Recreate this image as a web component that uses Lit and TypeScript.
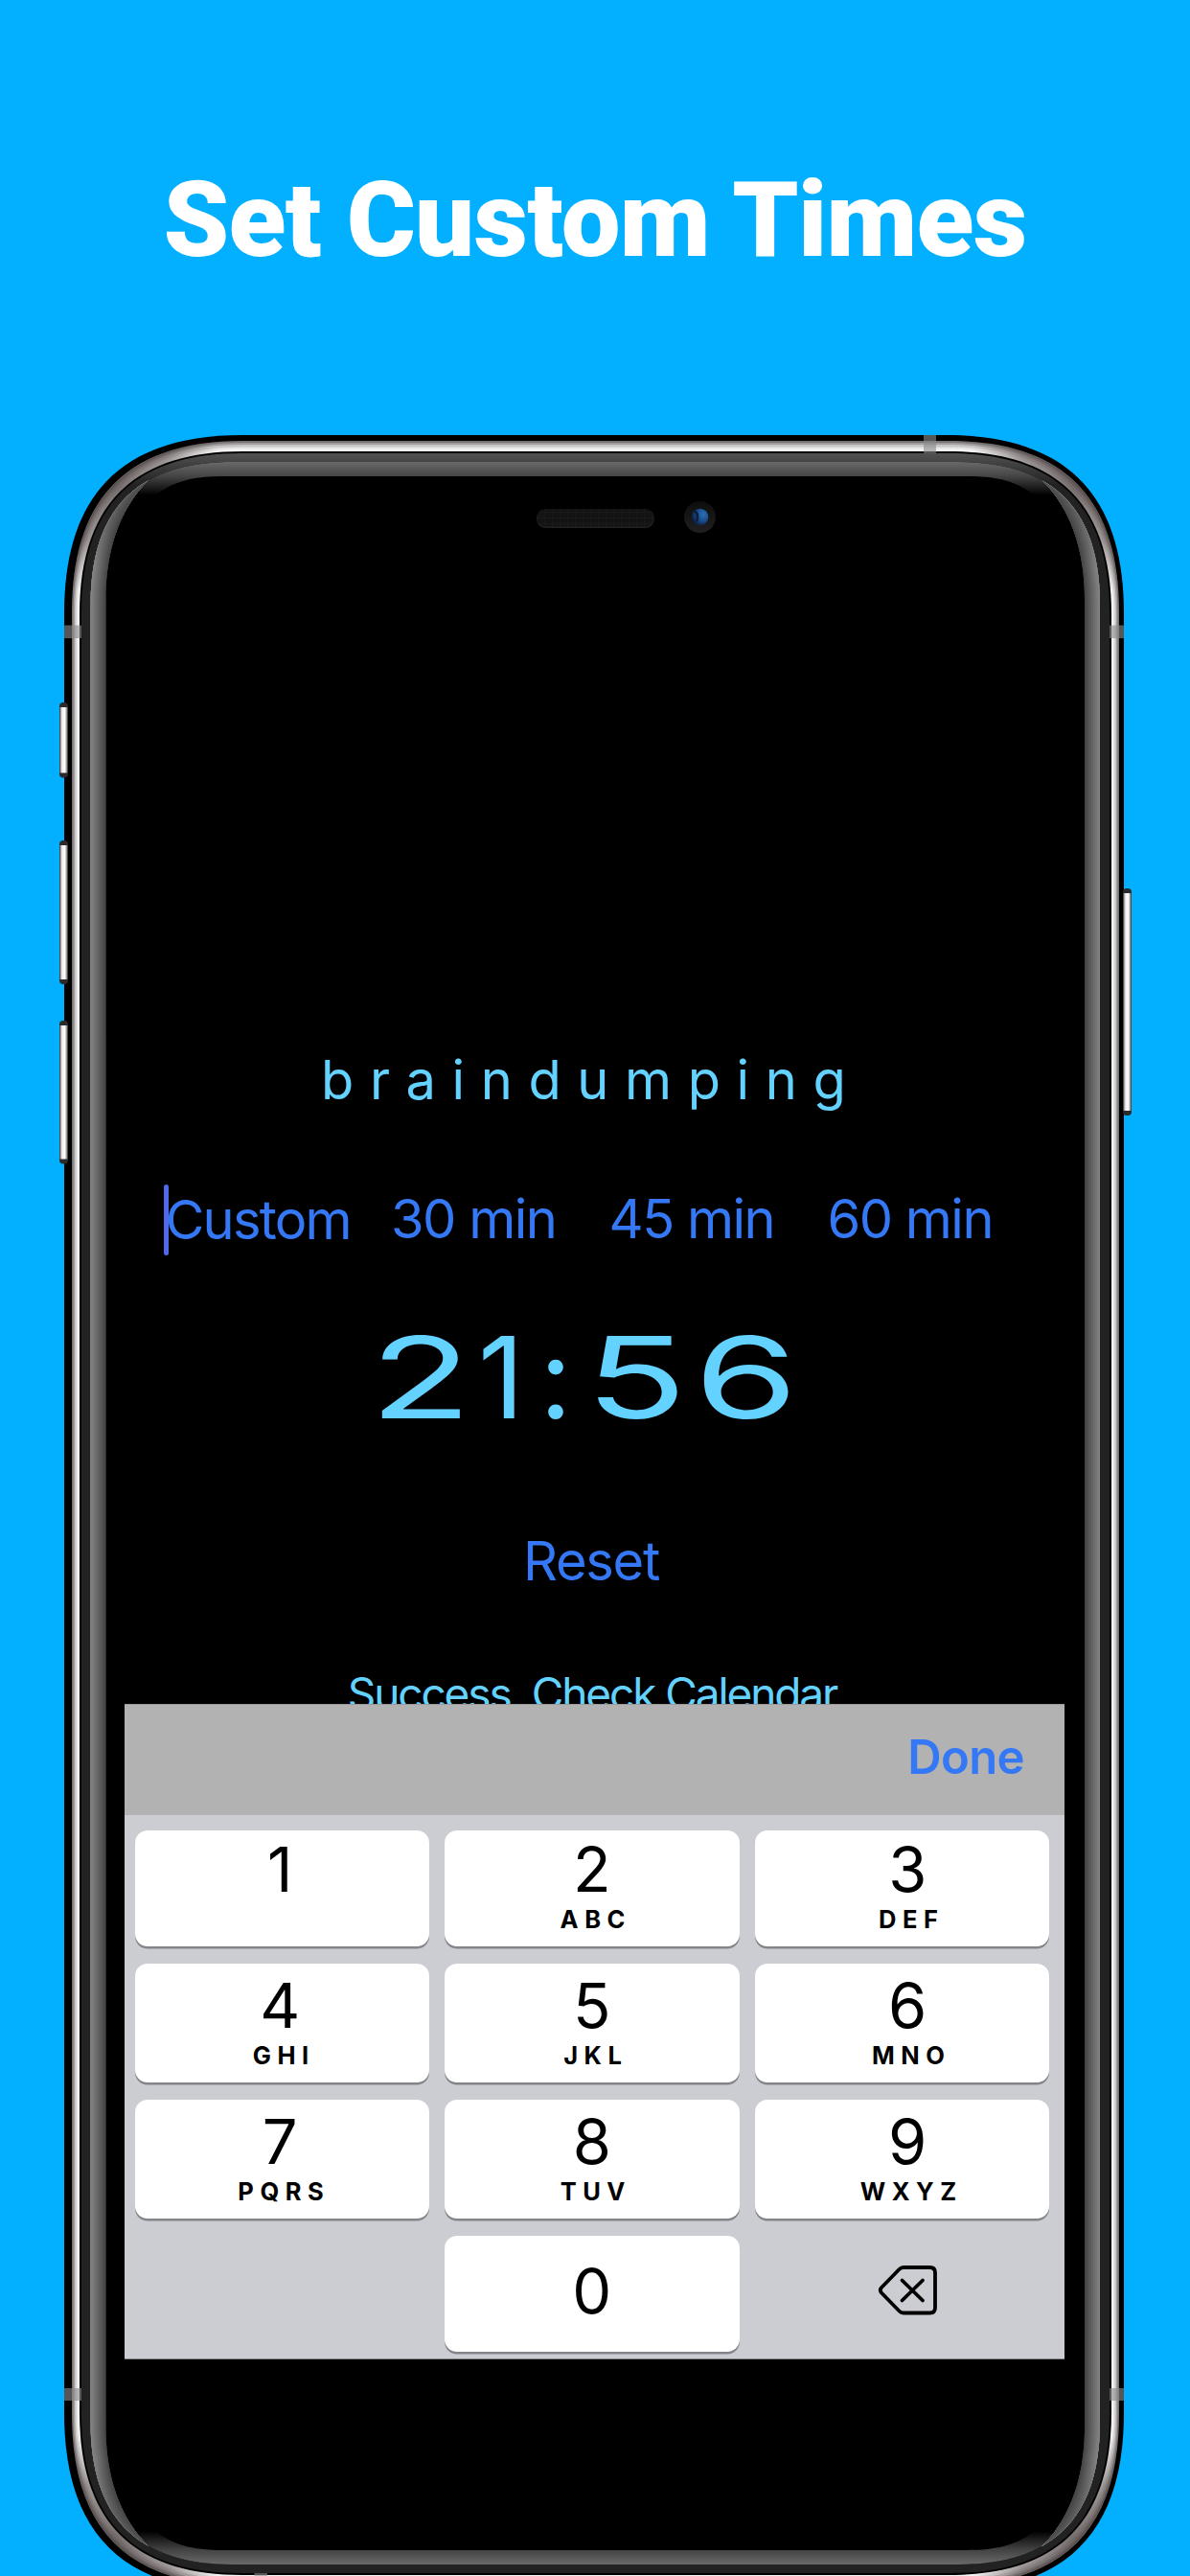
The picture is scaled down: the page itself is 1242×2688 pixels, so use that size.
import { LitElement, html, svg, css } from "lit";
import { customElement } from "lit/decorators.js";
import { classMap } from "lit/directives/class-map.js";

/** Closed contour with continuous-curvature corners of extent k. */
function contour(l: number, t: number, r: number, b: number, k: number): string {
  const h = k * 0.328;
  return (
    `M${l} ${t + k}C${l} ${t + h} ${l + h} ${t} ${l + k} ${t}` +
    `H${r - k}C${r - h} ${t} ${r} ${t + h} ${r} ${t + k}` +
    `V${b - k}C${r} ${b - h} ${r - h} ${b} ${r - k} ${b}` +
    `H${l + k}C${l + h} ${b} ${l} ${b - h} ${l} ${b - k}Z`
  );
}

@customElement("phone-frame")
class PhoneFrame extends LitElement {
  static styles = css`
    :host { display: block; }
    svg { display: block; }
  `;

  private sideButton(x: number, y: number, h: number) {
    return svg`
      <rect x=${x} y=${y} width="9" height=${h} rx="4" fill="#2b2b2b"></rect>
      <rect x=${x + 0.5} y=${y + 5} width="8" height=${h - 10} fill="url(#btn)"></rect>`;
  }

  render() {
    const rim = [
      [75, 460, 1168, 2698, "#777272"],
      [76.5, 462, 1166.5, 2696, "#a19d9d"],
      [78, 464, 1165, 2694, "#c9c6c6"],
      [79.5, 466.5, 1163.5, 2691.5, "#e6e5e5"],
      [81, 468.5, 1162, 2689.5, "#f6f5f5"],
    ] as const;
    const glass = contour(94.5, 482, 1148, 2676, 149);
    const sheen = Array.from({ length: 9 }, (_, i) => {
      const level = Math.round(66 + (i * 67) / 8);
      return { width: 34 - i * 4, color: `rgb(${level},${level},${level})` };
    });
    return html`
      <svg width="1242" height="2688" viewBox="0 0 1242 2688" aria-hidden="true">
        <defs>
          <linearGradient id="btn"><stop offset="0" stop-color="#77706f"/><stop offset=".3" stop-color="#f5f1f0"/><stop offset=".65" stop-color="#fffdfc"/><stop offset="1" stop-color="#6d6866"/></linearGradient>
          <linearGradient id="top" gradientUnits="userSpaceOnUse" x1="0" x2="0" y1="482" y2="517"><stop offset="0" stop-color="#696969"/><stop offset=".43" stop-color="#444"/><stop offset="1" stop-color="#000"/></linearGradient>
          <linearGradient id="bottom" gradientUnits="userSpaceOnUse" x1="0" x2="0" y1="2676" y2="2641"><stop offset="0" stop-color="#696969"/><stop offset=".43" stop-color="#444"/><stop offset="1" stop-color="#000"/></linearGradient>
          <linearGradient id="bezel" gradientUnits="userSpaceOnUse" x1="0" x2="0" y1="473" y2="506"><stop offset="0" stop-color="#525252"/><stop offset=".35" stop-color="#404040"/><stop offset="1" stop-color="#222"/></linearGradient>
          <linearGradient id="dim" gradientUnits="userSpaceOnUse" x1="0" x2="0" y1="482" y2="2676"><stop offset=".008" stop-opacity=".42"/><stop offset=".05" stop-opacity="0"/><stop offset=".95" stop-opacity="0"/><stop offset=".992" stop-opacity=".42"/></linearGradient>
          <radialGradient id="shade"><stop offset="0" stop-color="#4a3f3e" stop-opacity=".72"/><stop offset=".55" stop-color="#4a3f3e" stop-opacity=".5"/><stop offset="1" stop-color="#4a3f3e" stop-opacity="0"/></radialGradient>
          <radialGradient id="lens" cx=".7" cy=".35" r=".75"><stop offset="0" stop-color="#2a6fb5"/><stop offset=".5" stop-color="#1b4f8c"/><stop offset="1" stop-color="#0b1730"/></radialGradient>
          <linearGradient id="ring" x2="0" y2="1"><stop offset="0" stop-color="#0d0d0d"/><stop offset="1" stop-color="#202020"/></linearGradient>
          <pattern id="mesh" width="8" height="6" patternUnits="userSpaceOnUse"><rect width="8" height="6" fill="#131313"/><path d="M0 .5H8M.5 0V6" stroke="#191919"/></pattern>
          <clipPath id="glass"><path d=${glass}/></clipPath>
          <clipPath id="sides">
            <path d="M90 487H172C134 513 110.500 560 110.500 625V2533C110.500 2598 134 2645 172 2671H90Z"/>
            <path d="M1153 487H1070.500C1108.500 513 1132 560 1132 625V2533C1132 2598 1108.500 2645 1070.500 2671H1153Z"/>
          </clipPath>
          <clipPath id="rim"><path d=${contour(75, 460, 1168, 2698, 180)}/></clipPath>
        </defs>

        <path d=${contour(67, 454, 1173, 2704, 186)} fill="#000"/>
        ${this.sideButton(62, 733, 78.5)} ${this.sideButton(62, 877, 150)}
        ${this.sideButton(62, 1065, 149.5)} ${this.sideButton(1172, 927, 237)}

        ${rim.map(([l, t, r, b, c]) => svg`<path d=${contour(l, t, r, b, 186 - (l - 67) * 0.9)} fill=${c}></path>`)}
        <g clip-path="url(#rim)">
          <circle cx="125" cy="514" r="112" fill="url(#shade)"/>
          <circle cx="1117" cy="514" r="112" fill="url(#shade)"/>
          <circle cx="125" cy="2644" r="112" fill="url(#shade)"/>
          <circle cx="1117" cy="2644" r="112" fill="url(#shade)"/>
        </g>
        <path d=${contour(83, 471, 1160, 2687, 170)} fill="#000"/>
        <path d=${contour(85, 473, 1158, 2685, 167)} fill="url(#bezel)"/>
        <path d=${glass} fill="#000"/>
        <g clip-path="url(#glass)">
          <path d="M130 482H1112V517H1080C1062 503 1042 497 1010 497H232C200 497 180 503 162 517H130Z" fill="url(#top)"/>
          <path d="M130 2676H1112V2641H1080C1062 2655 1042 2661 1010 2661H232C200 2661 180 2655 162 2641H130Z" fill="url(#bottom)"/>
          <g clip-path="url(#sides)">
            <path d=${glass} fill="#424242"/>
            ${sheen.map((s) => svg`<path d=${glass} fill="none" stroke=${s.color} stroke-width=${s.width}></path>`)}
            <path d=${glass} fill="url(#dim)"/>
          </g>
        </g>

        <g fill="#8a8a8a" fill-opacity=".62">
          <rect x="67" y="652.500" width="18" height="13.500"/>
          <rect x="1158" y="652.500" width="15" height="13.500"/>
          <rect x="67" y="2492" width="18" height="13"/>
          <rect x="1158" y="2492" width="15" height="13"/>
          <rect x="964" y="454" width="13" height="19"/>
          <rect x="265.500" y="2685" width="13.500" height="19"/>
        </g>

        <rect x="560" y="532" width="123" height="19" rx="9.500" fill="#222"/>
        <rect x="560" y="531" width="123" height="18.500" rx="9.250" fill="url(#mesh)"/>
        <circle cx="730.500" cy="539.500" r="16.500" fill="url(#ring)"/>
        <circle cx="730.500" cy="539.500" r="8.800" fill="url(#lens)"/>
        <path d="M725 533q5 4 2 11" stroke="#0a1e3d" stroke-width="2.500" fill="none"/>
      </svg>
    `;
  }
}

@customElement("num-pad")
class NumPad extends LitElement {
  static styles = css`
    :host { display: block; width: 981px; color: #000; }
    .toolbar {
      height: 115.5px; box-sizing: border-box; background: #b2b2b2;
      border-top: 1px solid #9a9a9a;
      display: flex; justify-content: flex-end; padding-right: 42px;
    }
    .done {
      font-size: 49px; line-height: 60px; font-weight: 600; letter-spacing: -0.6px;
      color: #3478f6; padding-top: 25px;
    }
    .pad {
      box-sizing: border-box; height: 568px; background: #cccdd2; border-bottom: 1px solid #85868a;
      padding: 16.5px 0 0 10.5px;
      display: grid; grid-template-columns: repeat(3, 307.5px);
      grid-template-rows: 121px 123.5px 123.5px 121px;
      gap: 18.3px 16px; align-content: start;
    }
    .key {
      box-sizing: border-box; background: #fff; border-radius: 13px;
      box-shadow: 0 2.5px 0 #848589;
      display: flex; flex-direction: column; align-items: center;
      padding-top: 3.7px;
    }
    .first { padding-top: 1.2px; }
    .zero { padding-top: 18px; }
    .left { padding-right: 4px; }
    .right { padding-left: 12px; }
    .plain { background: none; box-shadow: none; }
    .digit { font-size: 65px; line-height: 80px; font-weight: 400; }
    .letters {
      font-size: 25.5px; line-height: 32px; font-weight: 650; letter-spacing: 6.5px;
      margin: -4px -8px 0 0;
    }
    .erase { padding-top: 30px; }
    .erase svg { display: block; }
  `;

  private keys: [string, string][] = [
    ["1", ""], ["2", "ABC"], ["3", "DEF"],
    ["4", "GHI"], ["5", "JKL"], ["6", "MNO"],
    ["7", "PQRS"], ["8", "TUV"], ["9", "WXYZ"],
  ];

  render() {
    return html`
      <div class="toolbar"><span class="done">Done</span></div>
      <div class="pad">
        ${this.keys.map(([digit, letters], i) => html`
          <div class=${classMap({ key: true, first: i < 3, left: i % 3 === 0, right: i % 3 === 2 })}>
            <span class="digit">${digit}</span>
            ${letters ? html`<span class="letters">${letters}</span>` : null}
          </div>`)}
        <div class="key plain"></div>
        <div class="key zero"><span class="digit">0</span></div>
        <div class="key plain right erase">
          <svg width="63" height="54" viewBox="0 0 63 54" fill="none" stroke="#000" stroke-width="3.800" stroke-linecap="round" stroke-linejoin="round">
            <path d="M27 3H54.500Q60 3 60 8.500V45Q60 50.500 54.500 50.500H27Q24.500 50.500 22.500 48.500L4 29.500Q1.600 26.800 4 24L22.500 5Q24.500 3 27 3Z"/>
            <path d="M25.500 16.500L47 37.500M47 16.500L25.500 37.500"/>
          </svg>
        </div>
      </div>
    `;
  }
}

@customElement("app-root")
class AppRoot extends LitElement {
  static styles = css`
    :host {
      display: block; position: relative; width: 1242px; height: 2688px; overflow: hidden;
      background: #03b0ff; font-family: Inter, "Liberation Sans", sans-serif;
    }
    .frame { position: absolute; inset: 0; }
    .page { position: relative; display: flex; flex-direction: column; align-items: center; }
    .title {
      margin: 0; padding-top: 160px; height: 294px;
      font-family: Roboto, sans-serif; font-weight: 900; font-size: 110px; line-height: 140px;
      letter-spacing: -0.7px; color: #fff; white-space: nowrap;
    }
    .screen {
      box-sizing: border-box; width: 1021px; height: 1324px; padding-top: 639px;
      display: flex; flex-direction: column; align-items: center; white-space: nowrap;
    }
    .task {
      font-size: 56px; line-height: 68px; letter-spacing: 16.6px; color: #64d2ff;
      align-self: flex-start; margin-left: 224.5px;
    }
    .presets {
      align-self: flex-start; display: grid; grid-template-columns: 235.5px 227.5px 228px auto;
      margin: 70.5px 0 0 62px; height: 80px;
      font-size: 56px; line-height: 80px; letter-spacing: -1.5px; color: #3478f6;
    }
    .custom { position: relative; top: 1px; letter-spacing: -1.8px; }
    .caret {
      position: absolute; left: -1.5px; top: 3px; width: 5px; height: 74px; border-radius: 2.5px; background: #5068ea;
    }
    .timer {
      align-self: flex-start; display: grid; grid-template-columns: 86px 82px 32px 135px 96px;
      margin: 65px 0 0 285.5px; height: 120px;
      font-size: 118px; line-height: 120px; font-weight: 400; color: #64d2ff;
    }
    .glyph { justify-self: center; }
    .wide { transform: scaleX(1.48); }
    .reset {
      margin: 98.5px 0 0 -8px; font-size: 56px; line-height: 68px; letter-spacing: -1.3px; color: #3478f6;
    }
    .status {
      margin: 75.5px 0 0 -6px; font-size: 46px; line-height: 56px; letter-spacing: -2.1px; color: #64d2ff;
    }
    .pad { position: relative; margin-left: -1px; }
  `;

  render() {
    return html`
      <phone-frame class="frame"></phone-frame>
      <main class="page">
        <h1 class="title">Set Custom Times</h1>
        <section class="screen">
          <div class="task">braindumping</div>
          <div class="presets">
            <span class="custom"><i class="caret"></i>Custom</span>
            <span>30 min</span><span>45 min</span><span>60 min</span>
          </div>
          <div class="timer">
            ${[..."21:56"].map((c) => html`<span class=${classMap({ glyph: true, wide: c !== ":" && c !== "1" })}>${c}</span>`)}
          </div>
          <div class="reset">Reset</div>
          <div class="status">Success, Check Calendar</div>
        </section>
        <num-pad class="pad"></num-pad>
      </main>
    `;
  }
}
